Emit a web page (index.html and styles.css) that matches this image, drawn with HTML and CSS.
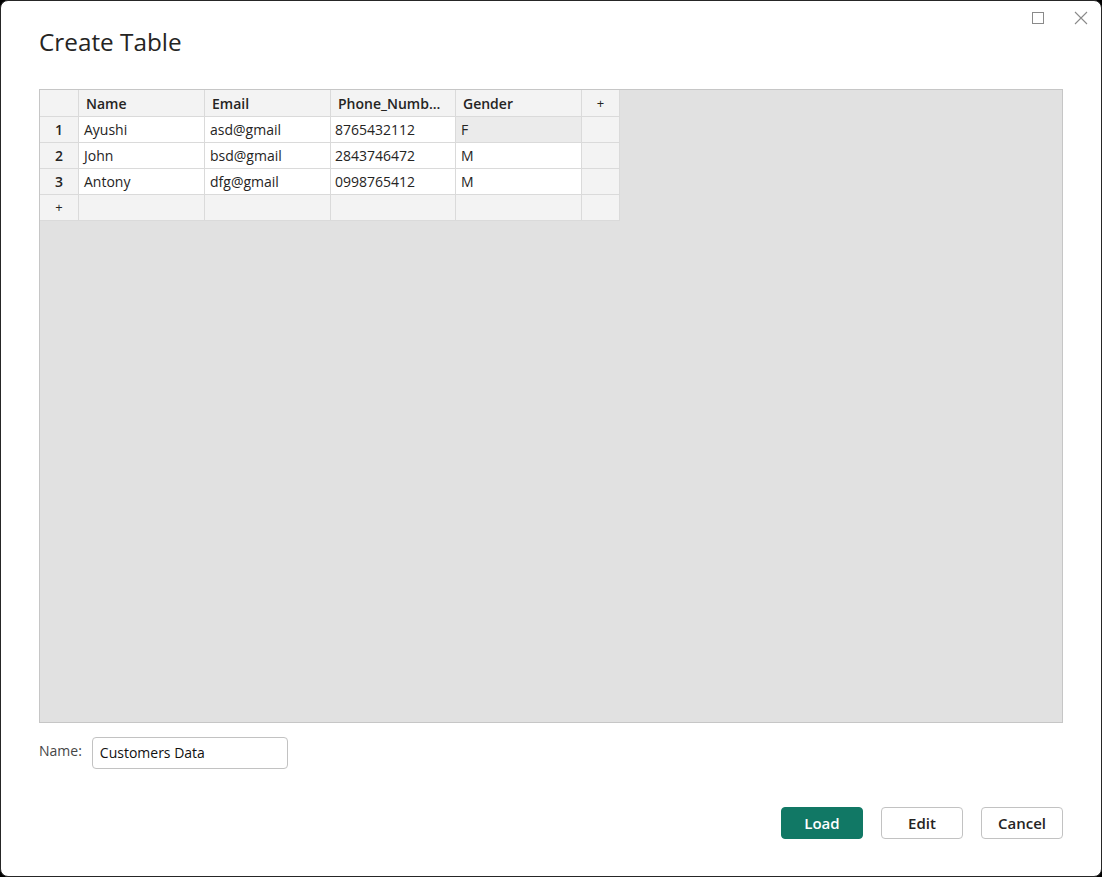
FILE: index.html
```html
<!DOCTYPE html>
<html>
<head>
<meta charset="utf-8">
<link rel="stylesheet" href="styles.css">
</head>
<body>
<div class="window">
  <div class="controls">
    <svg class="ctl" width="14" height="14" viewBox="0 0 14 14"><rect x="1.5" y="1.5" width="11" height="11" fill="none" stroke="#8a8a8a" stroke-width="1"/></svg>
    <svg class="ctl" width="14" height="14" viewBox="0 0 14 14"><path d="M1 1 L13 13 M13 1 L1 13" stroke="#8a8a8a" stroke-width="1.1" fill="none"/></svg>
  </div>
  <h1 class="title">Create Table</h1>
  <div class="grid-area">
    <table class="grid">
      <colgroup>
        <col class="c-idx"><col class="c-data"><col class="c-data"><col class="c-data2"><col class="c-data"><col class="c-plus">
      </colgroup>
      <thead>
        <tr><th class="idx"></th><th>Name</th><th>Email</th><th>Phone_Numb...</th><th>Gender</th><th class="plus">+</th></tr>
      </thead>
      <tbody>
        <tr><td class="idx">1</td><td>Ayushi</td><td>asd@gmail</td><td class="tight">8765432112</td><td class="sel">F</td><td class="plus"></td></tr>
        <tr><td class="idx">2</td><td>John</td><td>bsd@gmail</td><td class="tight">2843746472</td><td>M</td><td class="plus"></td></tr>
        <tr><td class="idx">3</td><td>Antony</td><td>dfg@gmail</td><td class="tight">0998765412</td><td>M</td><td class="plus"></td></tr>
        <tr class="addrow"><td class="idx add">+</td><td></td><td></td><td></td><td></td><td class="plus"></td></tr>
      </tbody>
    </table>
  </div>
  <div class="name-row">
    <label class="name-label">Name:</label>
    <div class="name-input">Customers Data</div>
  </div>
  <div class="buttons">
    <button class="btn primary">Load</button>
    <button class="btn">Edit</button>
    <button class="btn">Cancel</button>
  </div>
</div>
</body>
</html>
```

FILE: styles.css
```css
* { box-sizing: border-box; }
html, body { margin: 0; padding: 0; background: #000; }
body { font-family: "Segoe UI", "Open Sans", "Noto Sans", sans-serif; }

.window {
  position: relative;
  width: 1102px;
  height: 877px;
  background: #fff;
  border: 1px solid #262626;
  border-radius: 8px;
  padding: 0 38px;
  display: flex;
  flex-direction: column;
}

.controls {
  position: absolute;
  top: 10px;
  right: 13px;
  display: flex;
  gap: 29px;
}

.title {
  margin: 0;
  padding-top: 25px;
  font-size: 24.3px;
  line-height: 32px;
  font-weight: 400;
  color: #252423;
}

.grid-area {
  margin-top: 31px;
  height: 634px;
  background: #e1e1e1;
  border: 1px solid #c6c6c6;
}

.grid {
  border-collapse: separate;
  border-spacing: 0;
  table-layout: fixed;
  width: 580px;
  font-size: 14px;
  color: #252423;
}
.c-idx { width: 39px; }
.c-data { width: 126px; }
.c-data2 { width: 125px; }
.c-plus { width: 38px; }

.grid th, .grid td {
  height: 26px;
  padding: 0 5px;
  border: 1px solid #dadada;
  border-top: none;
  border-left: none;
  white-space: nowrap;
  overflow: hidden;
  text-align: left;
  background: #fff;
  line-height: 25px;
}
.grid th {
  height: 27px;
  background: #f3f3f3;
  font-weight: 600;
  padding-left: 7px;
}
.grid th.idx, .grid td.idx {
  background: #f3f3f3;
  font-weight: 600;
  text-align: center;
}
.grid td.add { font-weight: 400; font-size: 13px; }
.grid .plus {
  background: #f3f3f3;
  text-align: center;
  font-weight: 400;
  font-size: 13px;
  padding: 0;
}
.grid td.tight { padding-left: 4px; }
.grid td.sel { background: #ebebeb; }
.grid tr.addrow td { background: #f3f3f3; }

.name-row {
  margin-top: 14px;
  display: flex;
  align-items: center;
  gap: 10px;
}
.name-label {
  font-size: 14px;
  color: #464646;
  margin-top: -6px;
}
.name-input {
  width: 196px;
  height: 32px;
  border: 1px solid #c2c2c2;
  border-radius: 4px;
  padding: 0 7px;
  font-size: 14px;
  line-height: 30px;
  color: #111;
}

.buttons {
  margin-top: 38px;
  display: flex;
  justify-content: flex-end;
  gap: 18px;
}
.btn {
  width: 82px;
  height: 32px;
  border: 1px solid #c2c2c2;
  border-radius: 4px;
  background: #fff;
  font-family: inherit;
  font-size: 15px;
  font-weight: 600;
  color: #252423;
  padding: 0;
}
.btn.primary {
  background: #117865;
  border-color: #117865;
  color: #fff;
}
```
